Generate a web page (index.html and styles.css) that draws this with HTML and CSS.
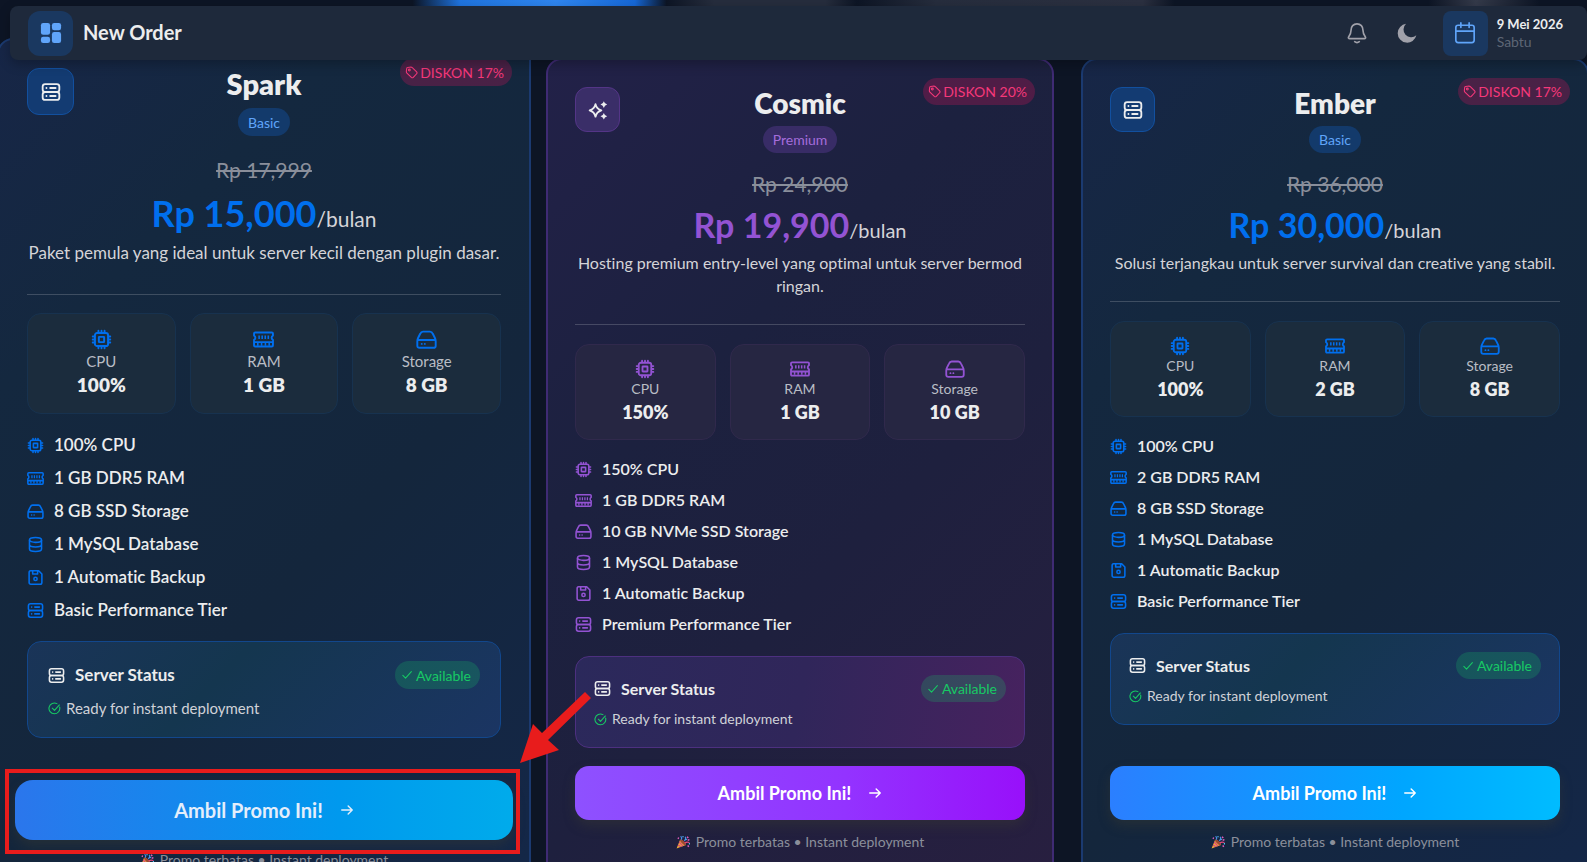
FILE: index.html
```html
<!DOCTYPE html>
<html lang="id">
<head>
    <meta charset="UTF-8">
    <meta name="viewport" content="width=device-width, initial-scale=1.0">
    <title>New Order</title>
    <link rel="stylesheet" href="styles.css">
</head>
<body>
    <!-- Icon sprite -->
    <svg class="sprite" aria-hidden="true">
        <symbol id="i-grid" viewBox="0 0 24 24"><g fill="currentColor"><rect x="1" y="1" width="10" height="13" rx="2.5"/><rect x="13" y="1" width="10" height="8" rx="2.5"/><rect x="1" y="16" width="10" height="7" rx="2.5"/><rect x="13" y="11" width="10" height="12" rx="2.5"/></g></symbol>
        <symbol id="i-server" viewBox="0 0 24 24"><g fill="none" stroke="currentColor" stroke-width="2.2" stroke-linecap="round"><rect x="2" y="2.5" width="20" height="9.5" rx="3"/><rect x="2" y="12" width="20" height="9.5" rx="3"/><path d="M11 7.2h6.5M11 16.800h6.5M6.500 7.2h.1M6.500 16.800h.1"/></g></symbol>
        <symbol id="i-stars" viewBox="0 0 24 24"><g fill="none" stroke="currentColor" stroke-width="2.2" stroke-linejoin="round"><path d="M9 5c1 4.200 2.500 6 7 7.500-4.500 1.500-6 3.300-7 7.500-1-4.200-2.500-6-7-7.500 4.500-1.500 6-3.300 7-7.500z"/></g><path fill="currentColor" d="M19 1.500q.8 3.200 4 4-3.200.8-4 4-.8-3.200-4-4 3.200-.8 4-4zM19 15.500q.8 3.200 4 4-3.200.8-4 4-.8-3.200-4-4 3.200-.8 4-4z"/></symbol>
        <symbol id="i-cpu" viewBox="0 0 24 24"><g fill="none" stroke="currentColor" stroke-width="2.2" stroke-linecap="round"><rect x="4.500" y="4.500" width="15" height="15" rx="2.500"/><rect x="9" y="9" width="6" height="6" rx=".5"/><path d="M8.500 4V2M12 4V2M15.500 4V2M8.500 22v-2M12 22v-2M15.500 22v-2M4 8.500H2M4 12H2M4 15.500H2M22 8.500h-2M22 12h-2M22 15.500h-2"/></g></symbol>
        <symbol id="i-ram" viewBox="0 0 24 24"><g fill="none" stroke="currentColor" stroke-width="2.2" stroke-linejoin="round"><path d="M2.500 4h19q1.300 0 1.300 1.200v2.300q-1.500.8-1.500 2.500t1.500 2.500V18.500q0 1.500-1.300 1.500h-19q-1.300 0-1.300-1.500v-6q1.500-.8 1.500-2.500t-1.500-2.500V5.200q0-1.200 1.300-1.200zM1.500 15h21"/><path d="M7 7.500v4M10.500 7.500v4M14 7.500v4M17.500 7.500v4M5.500 15.500V19M9.800 15.500V19M14.200 15.500V19M18.500 15.500V19" stroke-width="1.800"/></g></symbol>
        <symbol id="i-disk" viewBox="0 0 24 24"><g fill="none" stroke="currentColor" stroke-width="2.2" stroke-linecap="round" stroke-linejoin="round"><path d="M1.500 14q0-2 1-4l2.300-4.500Q5.800 3 8 3h8q2.200 0 3.200 2.500L21.500 10q1 2 1 4v5q0 2.500-2.500 2.500H4Q1.500 21.500 1.500 19zM2.500 12.500h19M6.500 17h.1M10 17h.1"/></g></symbol>
        <symbol id="i-db" viewBox="0 0 24 24"><g fill="none" stroke="currentColor" stroke-width="2.2"><ellipse cx="12" cy="5.500" rx="8.500" ry="3.500"/><path d="M3.500 5.500v13c0 2 4 3.500 8.500 3.500s8.500-1.500 8.500-3.500v-13M3.500 12c0 2 4 3.500 8.500 3.500s8.500-1.500 8.500-3.500"/></g></symbol>
        <symbol id="i-save" viewBox="0 0 24 24"><g fill="none" stroke="currentColor" stroke-width="2.2" stroke-linejoin="round"><path d="M5 2.500h11.500l4.500 4.500v12q0 2.500-2.500 2.500h-13Q3 21.500 3 19V5q0-2.500 2-2.500zM8 3v4h7V3"/><circle cx="12" cy="14" r="2.300"/></g></symbol>
        <symbol id="i-tag" viewBox="0 0 24 24"><g fill="none" stroke="currentColor" stroke-width="2" stroke-linejoin="round"><path d="M3 5q0-2 2-2.300l6-.7q1.500 0 2.500 1l8 8q1.500 1.700 0 3.300l-6.200 6.700q-1.800 1.500-3.500 0L3.500 13Q2.500 12 2.500 10.500z"/><circle cx="8" cy="7.500" r="1.700"/></g></symbol>
        <symbol id="i-check" viewBox="0 0 24 24"><path d="M2 13l6.500 6.500L22.500 4" fill="none" stroke="currentColor" stroke-width="2.500" stroke-linecap="round" stroke-linejoin="round"/></symbol>
        <symbol id="i-ok" viewBox="0 0 24 24"><path d="M21.500 9.500A10 10 0 1 1 16.500 3M8 11.500l4 4L21 5.500" fill="none" stroke="currentColor" stroke-width="2" stroke-linecap="round" stroke-linejoin="round"/></symbol>
        <symbol id="i-arrow" viewBox="0 0 24 24"><path d="M3 12h18M14 5l7 7-7 7" fill="none" stroke="currentColor" stroke-width="2.400" stroke-linecap="round" stroke-linejoin="round"/></symbol>
        <symbol id="i-party" viewBox="0 0 24 24"><path d="M1 23L7 8q8 2 10 9z" fill="#f4a93a"/><path d="M3.500 17l5 3.200M5.500 12l6.500 7" stroke="#d9487d" stroke-width="2"/><ellipse cx="12" cy="12.500" rx="2.500" ry="6.500" transform="rotate(-45 12 12.500)" fill="#9a4a35"/><path d="M9 8q2-3-1-6M14 10q4-2 2-7" fill="none" stroke="#4a8fe8" stroke-width="2"/><path d="M15 14q3-3 8-1" fill="none" stroke="#e8487d" stroke-width="2"/><path d="M19 3l2 2M20 9l3-1M3 5l2 1M20 18l2 2" stroke="#e95fc0" stroke-width="2.500"/><path d="M12 2v2M22 15h2M17 8l1-1" stroke="#4fc3f7" stroke-width="2.500"/></symbol>
    </svg>

    <div class="tabs-glow"></div>

    <header class="topbar">
        <div class="topbar-icon"><svg class="ico-lg"><use href="#i-grid"/></svg></div>
        <h1>New Order</h1>
        <button class="icon-btn" type="button" aria-label="Notifikasi">
            <svg class="ico-lg" viewBox="0 0 24 24" fill="none" stroke="currentColor" stroke-width="1.800" stroke-linecap="round" stroke-linejoin="round"><path d="M12 2c-4 0-6.500 3-6.500 7 0 3.500-1 5-2.500 7-.8 1.200-.2 2.200 1 2.200h16c1.200 0 1.800-1 1-2.200-1.500-2-2.500-3.500-2.500-7 0-4-2.500-7-6.500-7zM9.500 21.500q2.500 2 5 0"/></svg>
        </button>
        <button class="icon-btn" type="button" aria-label="Mode gelap">
            <svg class="ico-lg" viewBox="0 0 24 24"><path d="M11 2A10.300 10.300 0 1 0 22.200 14.500 8 8 0 0 1 11 2z" fill="currentColor"/></svg>
        </button>
        <div class="topbar-icon date-icon">
            <svg class="ico-lg" viewBox="0 0 24 24" fill="none" stroke="currentColor" stroke-width="1.800" stroke-linecap="round"><rect x="2" y="3.500" width="20" height="19" rx="2.500"/><path d="M2.500 10h19M7.500 1v5M16.500 1v5"/></svg>
        </div>
        <div class="date">
            <strong>9 Mei 2026</strong>
            <span>Sabtu</span>
        </div>
    </header>

    <main class="plans">
        <article class="card blue active">
            <span class="discount"><svg><use href="#i-tag"/></svg>DISKON 17%</span>
            <div class="card-head">
                <div class="plan-icon"><svg><use href="#i-server"/></svg></div>
                <div class="plan-name">
                    <h2>Spark</h2>
                    <span class="tier">Basic</span>
                </div>
            </div>
            <del class="old-price">Rp 17,999</del>
            <div class="price"><strong>Rp 15,000</strong>/bulan</div>
            <p class="desc">Paket pemula yang ideal untuk server kecil dengan plugin dasar.</p>
            <hr>
            <div class="specs">
                <div class="spec"><svg><use href="#i-cpu"/></svg><span>CPU</span><strong>100%</strong></div>
                <div class="spec"><svg><use href="#i-ram"/></svg><span>RAM</span><strong>1 GB</strong></div>
                <div class="spec"><svg><use href="#i-disk"/></svg><span>Storage</span><strong>8 GB</strong></div>
            </div>
            <ul class="features">
                <li><svg><use href="#i-cpu"/></svg>100% CPU</li>
                <li><svg><use href="#i-ram"/></svg>1 GB DDR5 RAM</li>
                <li><svg><use href="#i-disk"/></svg>8 GB SSD Storage</li>
                <li><svg><use href="#i-db"/></svg>1 MySQL Database</li>
                <li><svg><use href="#i-save"/></svg>1 Automatic Backup</li>
                <li><svg><use href="#i-server"/></svg>Basic Performance Tier</li>
            </ul>
            <div class="status">
                <div class="status-head">
                    <svg><use href="#i-server"/></svg>
                    <h3>Server Status</h3>
                    <span class="available"><svg><use href="#i-check"/></svg>Available</span>
                </div>
                <p><svg><use href="#i-ok"/></svg>Ready for instant deployment</p>
            </div>
            <div class="cta">
                <button type="button">Ambil Promo Ini!<svg><use href="#i-arrow"/></svg></button>
                <div class="marker"></div>
                <svg class="marker-arrow" viewBox="0 0 72 72"><path d="M0 72L13 33l9 9L65 1l6 6-43 42 11 10z"/></svg>
            </div>
            <p class="note"><svg><use href="#i-party"/></svg>Promo terbatas • Instant deployment</p>
        </article>

        <article class="card purple">
            <span class="discount"><svg><use href="#i-tag"/></svg>DISKON 20%</span>
            <div class="card-head">
                <div class="plan-icon"><svg><use href="#i-stars"/></svg></div>
                <div class="plan-name">
                    <h2>Cosmic</h2>
                    <span class="tier">Premium</span>
                </div>
            </div>
            <del class="old-price">Rp 24,900</del>
            <div class="price"><strong>Rp 19,900</strong>/bulan</div>
            <p class="desc">Hosting premium entry-level yang optimal untuk server bermod ringan.</p>
            <hr>
            <div class="specs">
                <div class="spec"><svg><use href="#i-cpu"/></svg><span>CPU</span><strong>150%</strong></div>
                <div class="spec"><svg><use href="#i-ram"/></svg><span>RAM</span><strong>1 GB</strong></div>
                <div class="spec"><svg><use href="#i-disk"/></svg><span>Storage</span><strong>10 GB</strong></div>
            </div>
            <ul class="features">
                <li><svg><use href="#i-cpu"/></svg>150% CPU</li>
                <li><svg><use href="#i-ram"/></svg>1 GB DDR5 RAM</li>
                <li><svg><use href="#i-disk"/></svg>10 GB NVMe SSD Storage</li>
                <li><svg><use href="#i-db"/></svg>1 MySQL Database</li>
                <li><svg><use href="#i-save"/></svg>1 Automatic Backup</li>
                <li><svg><use href="#i-server"/></svg>Premium Performance Tier</li>
            </ul>
            <div class="status">
                <div class="status-head">
                    <svg><use href="#i-server"/></svg>
                    <h3>Server Status</h3>
                    <span class="available"><svg><use href="#i-check"/></svg>Available</span>
                </div>
                <p><svg><use href="#i-ok"/></svg>Ready for instant deployment</p>
            </div>
            <div class="cta">
                <button type="button">Ambil Promo Ini!<svg><use href="#i-arrow"/></svg></button>
            </div>
            <p class="note"><svg><use href="#i-party"/></svg>Promo terbatas • Instant deployment</p>
        </article>

        <article class="card blue">
            <span class="discount"><svg><use href="#i-tag"/></svg>DISKON 17%</span>
            <div class="card-head">
                <div class="plan-icon"><svg><use href="#i-server"/></svg></div>
                <div class="plan-name">
                    <h2>Ember</h2>
                    <span class="tier">Basic</span>
                </div>
            </div>
            <del class="old-price">Rp 36,000</del>
            <div class="price"><strong>Rp 30,000</strong>/bulan</div>
            <p class="desc">Solusi terjangkau untuk server survival dan creative yang stabil.</p>
            <hr>
            <div class="specs">
                <div class="spec"><svg><use href="#i-cpu"/></svg><span>CPU</span><strong>100%</strong></div>
                <div class="spec"><svg><use href="#i-ram"/></svg><span>RAM</span><strong>2 GB</strong></div>
                <div class="spec"><svg><use href="#i-disk"/></svg><span>Storage</span><strong>8 GB</strong></div>
            </div>
            <ul class="features">
                <li><svg><use href="#i-cpu"/></svg>100% CPU</li>
                <li><svg><use href="#i-ram"/></svg>2 GB DDR5 RAM</li>
                <li><svg><use href="#i-disk"/></svg>8 GB SSD Storage</li>
                <li><svg><use href="#i-db"/></svg>1 MySQL Database</li>
                <li><svg><use href="#i-save"/></svg>1 Automatic Backup</li>
                <li><svg><use href="#i-server"/></svg>Basic Performance Tier</li>
            </ul>
            <div class="status">
                <div class="status-head">
                    <svg><use href="#i-server"/></svg>
                    <h3>Server Status</h3>
                    <span class="available"><svg><use href="#i-check"/></svg>Available</span>
                </div>
                <p><svg><use href="#i-ok"/></svg>Ready for instant deployment</p>
            </div>
            <div class="cta">
                <button type="button">Ambil Promo Ini!<svg><use href="#i-arrow"/></svg></button>
            </div>
            <p class="note"><svg><use href="#i-party"/></svg>Promo terbatas • Instant deployment</p>
        </article>
    </main>
</body>
</html>
```

FILE: styles.css
```css
* {
    box-sizing: border-box;
}
body {
    margin: 0;
    height: 100vh;
    overflow: hidden;
    display: flex;
    flex-direction: column;
    background: #0d1525;
    color: #ecedee;
    font-family: Lato, 'Open Sans', sans-serif;
    font-variant-ligatures: none;
}
h1, h2, h3, p, ul {
    margin: 0;
    padding: 0;
}
button {
    font-family: inherit;
    border: none;
    cursor: pointer;
}
svg {
    display: block;
    flex: none;
}
.sprite {
    position: absolute;
    width: 0;
    height: 0;
}
.ico-lg {
    width: 22px;
    height: 22px;
}

/* blurred tab bar behind the header */
.tabs-glow {
    flex: none;
    height: 6px;
    background: linear-gradient(90deg, transparent 26%, #1f74e0 29%, #2f86f0 35%, #1668d8 40%, transparent 42%, #262d3d 45%, #262d3d 52%, transparent 54%, #262d3d 59%, #2b3040 72%, transparent 74%, transparent 90%, #343a4a 93%, transparent 97%);
}

/* Header */
.topbar {
    flex: none;
    position: relative;
    z-index: 2;
    display: flex;
    align-items: center;
    height: 54px;
    margin-left: 10px;
    padding: 0 24px 0 18px;
    background: #1e293b;
    border-radius: 8px;
    box-shadow: 0 4px 12px rgba(0, 0, 0, 0.25);
}
.topbar h1 {
    flex: 1;
    margin: 0 0 2px 10px;
    font-size: 20px;
    line-height: 28px;
    font-weight: 700;
}
.topbar-icon {
    display: flex;
    align-items: center;
    justify-content: center;
    width: 45px;
    height: 45px;
    border-radius: 12px;
    background: #1a3860;
    color: #60a5fa;
}
.icon-btn {
    display: flex;
    align-items: center;
    justify-content: center;
    width: 50px;
    height: 45px;
    padding: 0;
    background: none;
    color: #a1a1aa;
}
.date-icon {
    margin: 0 9px 0 11px;
    border-radius: 8px;
}
.date strong, .date span {
    display: block;
    font-size: 13px;
    line-height: 18px;
    font-weight: 700;
}
.date span {
    font-size: 14px;
    font-weight: 400;
    color: #5d6675;
}

/* Plan cards */
.plans {
    flex: none;
    display: grid;
    grid-template-columns: repeat(3, minmax(0, 1fr));
    gap: 27px;
    margin: -2px -2px 0 11px;
}
.card {
    --text: 16px;
    --line: 20px;
    --small: 14px;
    position: relative;
    display: flex;
    flex-direction: column;
    padding: 27px;
    border: 2px solid;
    border-radius: 16px;
}
.blue {
    --accent: #006fee;
    --tint: #60a5fa;
    --tier-bg: #133a6b;
    --icon-bg: #133b72;
    --icon-border: #12509f;
    --spec-bg: #1b2c3d;
    --spec-border: #17324f;
    --status-bg: linear-gradient(135deg, #1a3458, #14364f 40%, #1b3563);
    --status-border: #12478c;
    --cta-bg: linear-gradient(90deg, #2b7fff, #00a6ff 65%, #00bcff);
    background: linear-gradient(135deg, #172647, #14283f 25%, #14263c 60%, #142748);
    border-color: #1b3a70;
}
.purple {
    --accent: #9353d3;
    --tint: #a56ddc;
    --tier-bg: #382c66;
    --icon-bg: #3a2e68;
    --icon-border: #543587;
    --spec-bg: #262642;
    --spec-border: #30294c;
    --status-bg: linear-gradient(100deg, #2b295b, #30265a 50%, #47225f);
    --status-border: #4d3080;
    --cta-bg: linear-gradient(90deg, #8e51ff, #9333ff 60%, #9810fa);
    background: linear-gradient(135deg, #222148, #1c213f 35%, #1e203e 60%, #281f40);
    border-color: #3f2b74;
}
.discount {
    position: absolute;
    top: 18px;
    right: 17px;
    display: flex;
    align-items: center;
    gap: 2px;
    height: 27px;
    padding: 0 8px 0 5px;
    border-radius: 14px;
    background: rgba(243, 18, 96, 0.24);
    color: #f5387a;
    font-size: 14px;
}
.discount svg {
    width: 13px;
    height: 13px;
}
.card-head {
    display: grid;
    grid-template-columns: 45px 1fr 45px;
}
.plan-icon {
    display: flex;
    align-items: center;
    justify-content: center;
    width: 45px;
    height: 45px;
    border: 1px solid var(--icon-border);
    border-radius: 12px;
    background: var(--icon-bg);
}
.plan-icon svg {
    width: 20px;
    height: 20px;
}
.plan-name {
    display: flex;
    flex-direction: column;
    align-items: center;
    gap: 7px;
}
.plan-name h2 {
    font-size: 28px;
    line-height: 32px;
    font-weight: 800;
}
.tier {
    display: flex;
    align-items: center;
    height: 27px;
    padding: 0 10px;
    border-radius: 14px;
    background: var(--tier-bg);
    color: var(--tint);
    font-size: 14px;
}
.old-price {
    margin-top: 16px;
    text-align: center;
    font-size: 21px;
    line-height: 30px;
    color: #8a8f9b;
}
.price {
    margin-top: 5px;
    text-align: center;
    font-size: 20px;
    line-height: 42px;
    color: #d4d4d8;
}
.price strong {
    font-size: 34px;
    font-weight: 700;
    color: var(--accent);
}
.desc {
    text-align: center;
    font-size: var(--text);
    line-height: 23px;
    color: #d4d4d8;
}
.card hr {
    width: 100%;
    height: 1px;
    margin: 27px 0 19px;
    border: none;
    background: rgba(255, 255, 255, 0.18);
}
.specs {
    display: grid;
    grid-template-columns: repeat(3, 1fr);
    gap: 14px;
}
.spec {
    display: flex;
    flex-direction: column;
    align-items: center;
    padding: 14px;
    border: 1px solid var(--spec-border);
    border-radius: 14px;
    background: var(--spec-bg);
}
.spec svg {
    width: 20px;
    height: 20px;
    color: var(--accent);
}
.spec span {
    font-size: var(--small);
    line-height: var(--line);
    color: #b9bdc5;
}
.spec strong {
    font-size: 18px;
    line-height: 26px;
    font-weight: 800;
}
.features {
    display: flex;
    flex-direction: column;
    gap: 11px;
    margin: 19px 0 22px;
    list-style: none;
}
.features li {
    display: flex;
    align-items: center;
    gap: 10px;
    font-size: var(--text);
    line-height: var(--line);
    font-weight: 600;
}
.features svg {
    width: 17px;
    height: 17px;
    color: var(--accent);
}
.status {
    padding: 18px;
    border: 1px solid var(--status-border);
    border-radius: 14px;
    background: var(--status-bg);
}
.status-head {
    display: flex;
    align-items: center;
    gap: 10px;
}
.status-head > svg {
    width: 17px;
    height: 17px;
}
.status h3 {
    flex: 1;
    font-size: var(--text);
    line-height: var(--line);
    font-weight: 700;
}
.available {
    display: flex;
    align-items: center;
    gap: 4px;
    height: 27px;
    padding: 0 9px 0 7px;
    border-radius: 14px;
    background: rgba(23, 201, 100, 0.22);
    color: #17c964;
    font-size: 14px;
}
.available svg {
    width: 10px;
    height: 10px;
}
.status p {
    display: flex;
    align-items: center;
    gap: 5px;
    margin-top: 7px;
    font-size: var(--small);
    line-height: var(--line);
    color: #d0d2d8;
}
.status p svg {
    width: 13px;
    height: 13px;
    color: #17c964;
}
.cta {
    position: relative;
    margin-top: auto;
    padding-top: 18px;
}
.cta button {
    display: flex;
    align-items: center;
    justify-content: center;
    gap: 17px;
    width: 100%;
    height: 54px;
    border-radius: 14px;
    background: var(--cta-bg);
    box-shadow: 0 6px 12px rgba(60, 60, 50, 0.4);
    color: white;
    font-size: 18px;
    font-weight: 700;
}
.cta button svg {
    width: 14px;
    height: 14px;
}
.note {
    display: flex;
    align-items: center;
    justify-content: center;
    gap: 6px;
    margin-top: 12px;
    font-size: 14px;
    line-height: var(--line);
    color: #8b8f9b;
}
.note svg {
    width: 14px;
    height: 14px;
}

/* Enlarged card */
.active {
    --text: 17px;
    --line: 22px;
    --small: 15px;
    z-index: 1;
    margin: -20px -12px -20px -14px;
    padding: 28px;
}
.active .card-head {
    grid-template-columns: 47px 1fr 47px;
}
.active .plan-icon {
    width: 47px;
    height: 47px;
}
.active .plan-name {
    gap: 8px;
}
.active .plan-name h2 {
    font-size: 29px;
}
.active .tier, .active .available, .active .discount {
    height: 28px;
}
.active .old-price {
    margin-top: 18px;
    line-height: 32px;
}
.active .price {
    font-size: 21px;
    line-height: 44px;
}
.active .price strong {
    font-size: 36px;
}
.active hr {
    margin: 30px 0 18px;
}
.active .spec {
    padding: 15px;
}
.active .spec svg {
    width: 21px;
    height: 21px;
}
.active .spec strong {
    font-size: 19px;
}
.active .features {
    margin: 20px 0;
}
.active .status {
    padding: 19px 20px 18px;
}
.active .status p {
    margin-top: 8px;
}
.active .cta {
    margin: auto -12px 0;
    padding: 0;
}
.active .cta button {
    height: 60px;
    border-radius: 18px;
    background: linear-gradient(90deg, #2b76ec, #0099ee 65%, #00abeb);
    color: #e4eefb;
    font-size: 20px;
}
.active .note {
    margin-top: 9px;
}
.marker {
    position: absolute;
    inset: -11px -7px -14px -10px;
    border: 4px solid #e81c1c;
    pointer-events: none;
}
.marker-arrow {
    position: absolute;
    top: -89px;
    right: -79px;
    width: 72px;
    height: 72px;
    fill: #e81c1c;
}
```
